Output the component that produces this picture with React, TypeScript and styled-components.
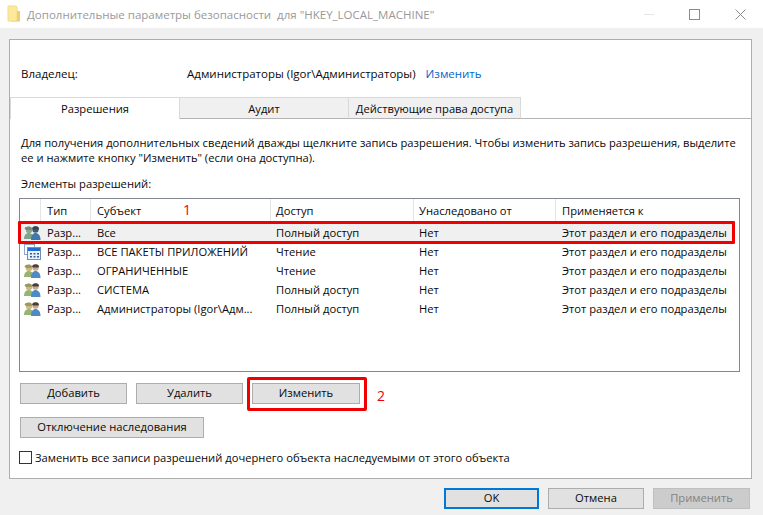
import React from "react";
import styled, { createGlobalStyle } from "styled-components";

const GlobalStyle = createGlobalStyle`
  html, body {
    margin: 0;
    padding: 0;
    background: #f0f0f0;
    overflow: hidden;
  }
  body {
    font-family: "Open Sans", "Noto Sans", "Liberation Sans", sans-serif;
    font-size: 11.2px;
    color: #0a0a0a;
  }
`;

const rows = [
  { icon: "all", type: "Разр...", subject: "Все", access: "Полный доступ", selected: true },
  { icon: "pkg", type: "Разр...", subject: "ВСЕ ПАКЕТЫ ПРИЛОЖЕНИЙ", access: "Чтение" },
  { icon: "users", type: "Разр...", subject: "ОГРАНИЧЕННЫЕ", access: "Чтение" },
  { icon: "users", type: "Разр...", subject: "СИСТЕМА", access: "Полный доступ" },
  { icon: "users", type: "Разр...", subject: "Администраторы (Igor\\Адм...", access: "Полный доступ" },
];

const UsersIcon: React.FC<{ muted?: boolean }> = ({ muted }) => (
  <svg width="17" height="16" viewBox="0 0 17 16">
    <circle cx="5" cy="5" r="3.200" fill={muted ? "#8fa68c" : "#cdb884"} />
    <path d="M0.500 3.500C1.500 1 7 0.800 8 3.500L7.500 5 2 5z" fill={muted ? "#6f8f78" : "#9a9a5c"} />
    <path d="M0 14c0-4 2-6 5-6s4.500 2 4.500 6z" fill={muted ? "#7fa58a" : "#97b474"} />
    <circle cx="11.500" cy="4.500" r="3.200" fill={muted ? "#3f5c70" : "#c9a98a"} />
    <path d="M8 3.500C9 0.500 14.500 0.500 15 3.500L14.500 4.500 9 4.500z" fill={muted ? "#2f4656" : "#4a3f38"} />
    <path d="M7 15c0-5 2-7 4.500-7S16.500 10 16.500 15z" fill={muted ? "#3f78ac" : "#4f8ac4"} />
  </svg>
);

const PackageIcon = () => (
  <svg width="17" height="16" viewBox="0 0 17 16">
    <rect x="0.500" y="0.500" width="10" height="10" fill="#fff" stroke="#8fa6c4" />
    <rect x="3.500" y="3.500" width="13" height="12" fill="#eaf1fa" stroke="#6f8fb8" />
    <rect x="4" y="4" width="12" height="3" fill="#1f6fd0" />
    <path d="M6 9h2v1.500H6zM9.500 9h2v1.500h-2zM13 9h2v1.500h-2zM6 12h2v1.500H6zM9.500 12h2v1.500h-2zM13 12h2v1.500h-2z" fill="#2b5fa8" />
  </svg>
);

const FolderIcon = () => (
  <svg width="14" height="18" viewBox="0 0 14 18">
    <path d="M1 1h8l1 1v14H1z" fill="#fde99a" stroke="#f2dc88" />
    <path d="M10 6h3v10.500H4V16h6z" fill="#ecd070" />
  </svg>
);

const App: React.FC = () => {
  return (
    <S.Window>
      <GlobalStyle />
      <S.TitleBar>
        <FolderIcon />
        <S.Title>Дополнительные параметры безопасности&nbsp; для "HKEY_LOCAL_MACHINE"</S.Title>
        <S.WindowButtons>
          <S.MinGlyph />
          <S.MaxGlyph />
          <svg width="11" height="11" viewBox="0 0 11 11">
            <path d="M0.500 0.500l10 10M10.500 0.500l-10 10" stroke="#8c8c8c" fill="none" />
          </svg>
        </S.WindowButtons>
      </S.TitleBar>

      <S.Panel>
        <S.OwnerRow>
          <S.OwnerLabel>Владелец:</S.OwnerLabel>
          <span>Администраторы (Igor\Администраторы)</span>
          <S.Link>Изменить</S.Link>
        </S.OwnerRow>

        <S.Tabs>
          <S.Tab $width={170} $active>Разрешения</S.Tab>
          <S.Tab $width={169}>Аудит</S.Tab>
          <S.Tab $width={172}>Действующие права доступа</S.Tab>
          <S.TabFill />
        </S.Tabs>

        <S.TabBody>
          <S.Description>
            Для получения дополнительных сведений дважды щелкните запись разрешения. Чтобы изменить запись разрешения, выделите
            <br />
            ее и нажмите кнопку "Изменить" (если она доступна).
          </S.Description>
          <S.ListLabel>Элементы разрешений:</S.ListLabel>

          <S.List>
            <S.HeaderRow>
              <S.HeaderCell />
              <S.HeaderCell>Тип</S.HeaderCell>
              <S.HeaderCell>
                Субъект
                <S.Mark $left={92} $top={-1}>1</S.Mark>
              </S.HeaderCell>
              <S.HeaderCell>Доступ</S.HeaderCell>
              <S.HeaderCell>Унаследовано от</S.HeaderCell>
              <S.HeaderCell>Применяется к</S.HeaderCell>
            </S.HeaderRow>
            {rows.map((row) => (
              <S.Row key={row.subject} $selected={row.selected}>
                <S.IconCell>
                  {row.icon === "pkg" ? <PackageIcon /> : <UsersIcon muted={row.icon === "all"} />}
                </S.IconCell>
                <S.Cell>{row.type}</S.Cell>
                <S.Cell>{row.subject}</S.Cell>
                <S.Cell>{row.access}</S.Cell>
                <S.Cell>Нет</S.Cell>
                <S.Cell>Этот раздел и его подразделы</S.Cell>
                {row.selected && <S.RowHighlight />}
              </S.Row>
            ))}
          </S.List>

          <S.ActionRow>
            <S.Button $width={107}>Добавить</S.Button>
            <S.Button $width={107}>Удалить</S.Button>
            <S.Highlighted>
              <S.Button $width={108}>Изменить</S.Button>
              <S.ButtonHighlight />
              <S.Mark $left={125} $top={1}>2</S.Mark>
            </S.Highlighted>
          </S.ActionRow>

          <S.InheritRow>
            <S.Button $width={184}>Отключение наследования</S.Button>
          </S.InheritRow>

          <S.CheckRow>
            <S.Checkbox />
            Заменить все записи разрешений дочернего объекта наследуемыми от этого объекта
          </S.CheckRow>
        </S.TabBody>
      </S.Panel>

      <S.Footer>
        <S.Button $width={95} $primary>OK</S.Button>
        <S.Button $width={96}>Отмена</S.Button>
        <S.Button $width={97} $disabled>Применить</S.Button>
      </S.Footer>
    </S.Window>
  );
};

const S = {
  Window: styled.div`
    width: 763px;
    height: 515px;
    display: flex;
    flex-direction: column;
    background: #f0f0f0;
  `,

  TitleBar: styled.div`
    height: 28px;
    flex: none;
    display: flex;
    align-items: center;
    padding-left: 7px;
    background: #fff;
  `,
  Title: styled.div`
    margin-left: 6px;
    font-size: 11.5px;
    color: #999;
    white-space: pre;
  `,
  WindowButtons: styled.div`
    margin-left: auto;
    margin-right: 17px;
    display: flex;
    align-items: center;
    gap: 35px;
  `,
  MinGlyph: styled.div`
    width: 10px;
    height: 1px;
    background: #e4e4e4;
  `,
  MaxGlyph: styled.div`
    width: 9px;
    height: 9px;
    border: 1px solid #8c8c8c;
  `,

  Panel: styled.div`
    width: 743px;
    height: 440px;
    box-sizing: border-box;
    margin: 11px 0 0 9px;
    flex: none;
    border: 1px solid #adadad;
    background: #fff;
  `,
  OwnerRow: styled.div`
    height: 57px;
    padding: 25px 0 0 11px;
    box-sizing: border-box;
    display: flex;
    align-items: flex-start;
    font-size: 11.5px;
    line-height: 17px;
  `,
  OwnerLabel: styled.span`
    width: 166px;
  `,
  Link: styled.a`
    margin-left: 10px;
    color: #0066cc;
  `,

  Tabs: styled.div`
    display: flex;
    height: 22px;
  `,
  Tab: styled.div<{ $width: number; $active?: boolean }>`
    width: ${(props) => props.$width}px;
    box-sizing: border-box;
    display: flex;
    align-items: center;
    justify-content: center;
    background: ${(props) => (props.$active ? "#fff" : "#f0f0f0")};
    border: 1px solid #d9d9d9;
    border-left: ${(props) => (props.$active ? "1px solid #d9d9d9" : "none")};
    border-bottom: ${(props) => (props.$active ? "none" : "1px solid #b4b4b4")};
  `,
  TabFill: styled.div`
    flex: 1;
    border-bottom: 1px solid #b4b4b4;
  `,
  TabBody: styled.div`
    padding: 16px 11px 0 11px;
  `,
  Description: styled.div`
    line-height: 15px;
    white-space: nowrap;
  `,
  ListLabel: styled.div`
    margin-top: 11px;
    line-height: 15px;
  `,

  List: styled.div`
    width: 721px;
    height: 174px;
    box-sizing: border-box;
    margin: 7px 0 0 -2px;
    border: 1px solid #828790;
    background: #fff;
  `,
  HeaderRow: styled.div`
    height: 24px;
    display: grid;
    grid-template-columns: 21px 50px 180px 143px 142px 1fr;
  `,
  HeaderCell: styled.div`
    position: relative;
    padding-left: 6px;
    line-height: 24px;
    border-right: 1px solid #e5e5e5;
    &:nth-child(4),
    &:nth-child(5) {
      padding-left: 5px;
    }
    &:last-child {
      border-right: none;
    }
  `,
  Row: styled.div<{ $selected?: boolean }>`
    position: relative;
    height: 19px;
    display: grid;
    grid-template-columns: 21px 50px 180px 143px 142px 1fr;
    align-items: center;
    background: ${(props) => (props.$selected ? "#f0f0f0" : "transparent")};
    width: ${(props) => (props.$selected ? "714px" : "auto")};
  `,
  IconCell: styled.div`
    display: flex;
    padding-left: 4px;
  `,
  Cell: styled.div`
    padding-left: 6px;
    white-space: nowrap;
    overflow: hidden;
    line-height: 19px;
    &:nth-child(4),
    &:nth-child(5) {
      padding-left: 5px;
    }
  `,
  RowHighlight: styled.div`
    position: absolute;
    left: -2px;
    right: -1px;
    top: -2px;
    bottom: -2px;
    border: 3px solid #f00000;
    border-radius: 1px;
    pointer-events: none;
  `,
  Mark: styled.span<{ $left: number; $top: number }>`
    position: absolute;
    left: ${(props) => props.$left}px;
    top: ${(props) => props.$top}px;
    font-size: 14px;
    line-height: 24px;
    color: #f00000;
  `,

  ActionRow: styled.div`
    display: flex;
    gap: 9px;
    margin-top: 11px;
    margin-left: -1px;
  `,
  InheritRow: styled.div`
    display: flex;
    margin-top: 13px;
    margin-left: -1px;
  `,
  Highlighted: styled.div`
    position: relative;
    display: flex;
  `,
  ButtonHighlight: styled.div`
    position: absolute;
    left: -5px;
    right: -7px;
    top: -6px;
    bottom: -7px;
    border: 3px solid #f00000;
    border-radius: 2px;
    pointer-events: none;
  `,
  Button: styled.button<{ $width: number; $primary?: boolean; $disabled?: boolean }>`
    width: ${(props) => props.$width}px;
    height: 21px;
    box-sizing: border-box;
    padding: 0 0 2px;
    font: inherit;
    color: ${(props) => (props.$disabled ? "#838383" : "#0a0a0a")};
    background: ${(props) => (props.$disabled ? "#cccccc" : "#e1e1e1")};
    border: ${(props) =>
      props.$primary ? "2px solid #0078d7" : props.$disabled ? "1px solid #bfbfbf" : "1px solid #adadad"};
  `,
  CheckRow: styled.div`
    display: flex;
    align-items: center;
    gap: 3px;
    margin-top: 13px;
    margin-left: -2px;
    line-height: 13px;
    white-space: nowrap;
  `,
  Checkbox: styled.span`
    width: 13px;
    height: 13px;
    box-sizing: border-box;
    border: 1px solid #333;
    background: #fff;
  `,

  Footer: styled.div`
    display: flex;
    gap: 9px;
    margin: 9px 0 0 444px;
  `,
};

export default App;
